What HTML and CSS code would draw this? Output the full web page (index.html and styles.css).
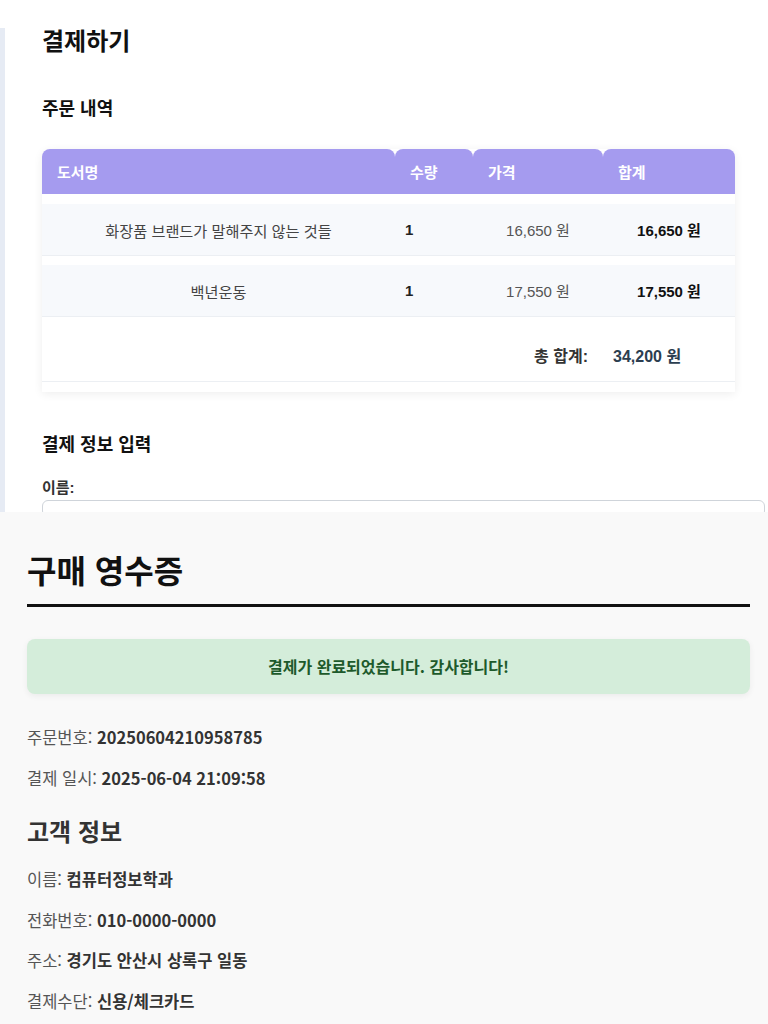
FILE: index.html
```html
<!DOCTYPE html>
<html lang="ko">
<head>
<meta charset="utf-8">
<title>결제하기</title>
<link rel="stylesheet" href="styles.css">
</head>
<body>
<section class="checkout">
  <div class="panel">
    <h1 class="co-title">결제하기</h1>
    <h2 class="co-sub">주문 내역</h2>
    <div class="table-card">
      <table class="order">
        <colgroup>
          <col class="c-title"><col class="c-qty"><col class="c-price"><col class="c-sum">
        </colgroup>
        <thead>
          <tr><th>도서명</th><th>수량</th><th>가격</th><th>합계</th></tr>
        </thead>
        <tbody>
          <tr class="item">
            <td class="t-title">화장품 브랜드가 말해주지 않는 것들</td>
            <td class="t-qty">1</td>
            <td class="t-price">16,650 원</td>
            <td class="t-sum">16,650 원</td>
          </tr>
          <tr class="item">
            <td class="t-title">백년운동</td>
            <td class="t-qty">1</td>
            <td class="t-price">17,550 원</td>
            <td class="t-sum">17,550 원</td>
          </tr>
          <tr class="total">
            <td colspan="3" class="t-total-label">총 합계:</td>
            <td class="t-total-value">34,200 원</td>
          </tr>
        </tbody>
      </table>
    </div>
    <h2 class="co-sub co-pay">결제 정보 입력</h2>
    <label class="field-label" for="name">이름:</label>
    <input class="field-input" id="name" type="text">
  </div>
</section>
<section class="receipt">
  <h1 class="rc-title">구매 영수증</h1>
  <div class="rc-success">결제가 완료되었습니다. 감사합니다!</div>
  <p class="rc-line rc-first">주문번호: <strong>20250604210958785</strong></p>
  <p class="rc-line">결제 일시: <strong>2025-06-04 21:09:58</strong></p>
  <h2 class="rc-sub">고객 정보</h2>
  <p class="rc-line rc-after-sub">이름: <strong>컴퓨터정보학과</strong></p>
  <p class="rc-line">전화번호: <strong>010-0000-0000</strong></p>
  <p class="rc-line">주소: <strong>경기도 안산시 상록구 일동</strong></p>
  <p class="rc-line">결제수단: <strong>신용/체크카드</strong></p>
</section>
</body>
</html>
```
FILE: styles.css
```css
html, body {
  margin: 0;
  padding: 0;
}
body {
  width: 768px;
  height: 1024px;
  overflow: hidden;
}
.checkout {
  height: 512px;
  box-sizing: border-box;
  padding-top: 28px;
  background: #ffffff;
  overflow: hidden;
  font-family: "Liberation Sans", "Noto Sans CJK KR", sans-serif;
  color: #222;
}
.panel {
  height: 100%;
  border-left: 5px solid #e6ebf4;
  padding-left: 37px;
  padding-right: 3px;
  display: flex;
  flex-direction: column;
  align-items: flex-start;
}
.co-title {
  margin: 0;
  font-size: 24px;
  line-height: 27px;
  font-weight: 700;
  color: #111;
}
.co-sub {
  margin: 42px 0 0;
  font-size: 18px;
  line-height: 24px;
  font-weight: 700;
  color: #111;
}
.table-card {
  margin-top: 28px;
  width: 693px;
  background: #fff;
  padding-bottom: 10px;
  border-radius: 8px 8px 0 0;
  box-shadow: 0 2px 10px rgba(0, 0, 0, 0.07);
}
.order {
  width: 693px;
  border-collapse: separate;
  border-spacing: 0;
  table-layout: fixed;
  font-size: 15px;
}
.c-title { width: 353px; }
.c-qty { width: 78px; }
.c-price { width: 130px; }
.c-sum { width: 132px; }
.order th {
  height: 45px;
  padding: 0 15px;
  text-align: left;
  background: #a59bef;
  color: #fff;
  font-weight: 700;
  font-size: 15px;
  border-radius: 8px 8px 0 0;
}
.item td {
  height: 51px;
  padding: 0;
  background: #f7f9fc;
  background-clip: padding-box;
  border-top: 10px solid #fff;
  border-bottom: 1px solid #eceff3;
  vertical-align: middle;
}
.item + .item td {
  border-top-width: 9px;
}
.t-title {
  text-align: center;
  color: #444;
  font-size: 15.2px;
}
.t-qty {
  padding-left: 10px !important;
  font-weight: 700;
  color: #222;
}
.t-price {
  text-align: center;
  color: #555;
}
.t-sum {
  text-align: center;
  font-weight: 700;
  color: #111;
}
.total td {
  height: 51px;
  padding-top: 12px;
  border-bottom: 1px solid #eceff3;
  font-weight: 700;
  font-size: 16px;
  vertical-align: middle;
}
.t-total-label {
  text-align: right;
  padding-right: 15px;
  color: #333;
}
.t-total-value {
  padding-left: 10px;
  color: #2c3e50;
}
.co-pay {
  margin-top: 41px;
}
.field-label {
  margin-top: 21px;
  font-size: 15px;
  line-height: 20px;
  font-weight: 700;
  color: #333;
}
.field-input {
  margin-top: 2px;
  width: 723px;
  height: 40px;
  box-sizing: border-box;
  border: 1px solid #cfd4da;
  border-radius: 6px;
  background: #fff;
  padding: 0 10px;
}

.receipt {
  height: 512px;
  box-sizing: border-box;
  padding: 0 18px 0 27px;
  background: #f9f9f9;
  overflow: hidden;
  font-family: "Noto Sans CJK KR", "Noto Sans", sans-serif;
  color: #555;
  display: flex;
  flex-direction: column;
}
.rc-title {
  margin: 38px 0 0;
  padding-bottom: 15px;
  border-bottom: 3px solid #111;
  font-size: 32px;
  line-height: 39px;
  font-weight: 700;
  color: #111;
}
.rc-success {
  margin-top: 32px;
  padding: 15px;
  line-height: 25px;
  border-radius: 8px;
  background: #d4edda;
  color: #1d5a2b;
  text-align: center;
  font-size: 16px;
  font-weight: 700;
  box-shadow: 0 2px 6px rgba(0, 0, 0, 0.06);
}
.rc-line {
  margin: 16px 0 0;
  font-size: 16.5px;
  line-height: 24.5px;
  color: #555;
}
.rc-line strong {
  color: #333;
  font-weight: 700;
}
.rc-first {
  margin-top: 31px;
}
.rc-sub {
  margin: 26px 0 0;
  font-size: 24px;
  line-height: 29px;
  font-weight: 700;
  color: #333;
}
.rc-after-sub {
  margin-top: 22px;
}
```
